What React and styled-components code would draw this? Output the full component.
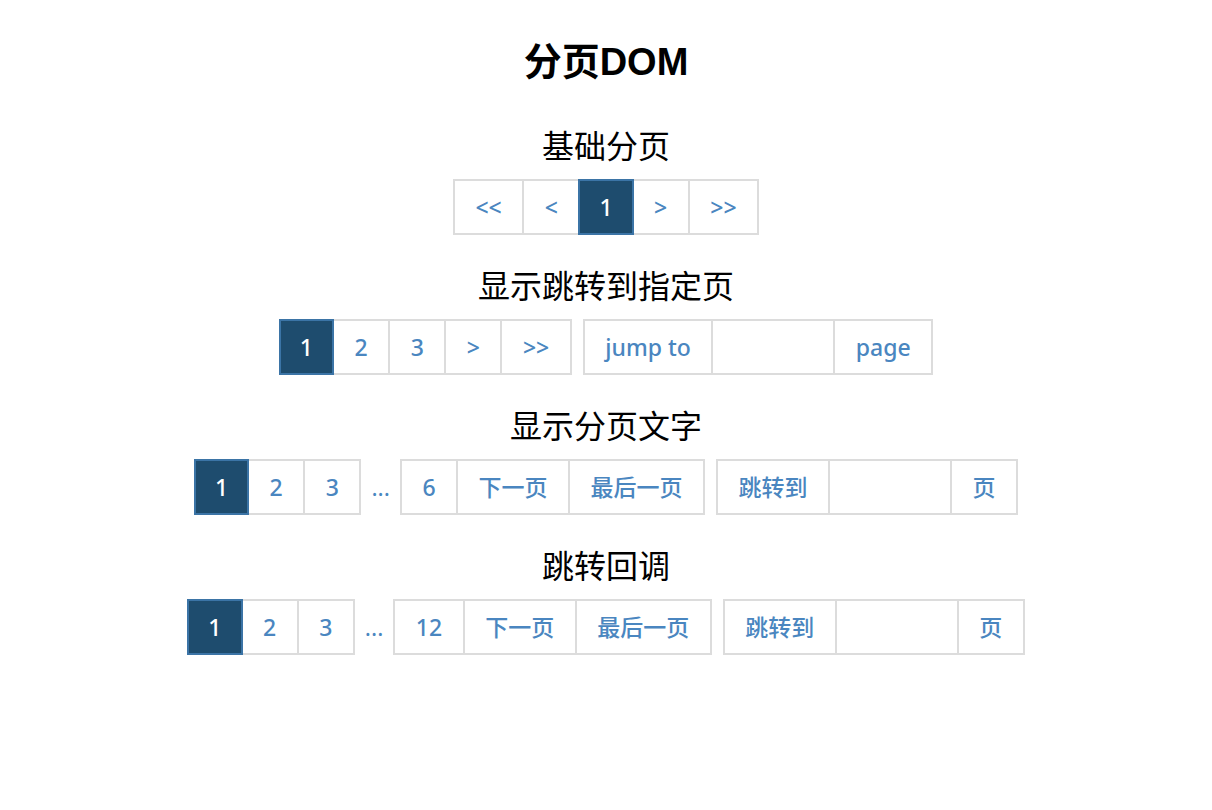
import React from 'react';
import styled, { createGlobalStyle, css } from 'styled-components';

const Global = createGlobalStyle`
  html, body { margin: 0; padding: 0; background: #fff; }
  body { font-family: "Noto Sans", "Noto Sans CJK SC", sans-serif; color: #000; }
`;

const LINK = '#4a86c0';
const BORDER = '#dcdcdc';

const Page = styled.div`
  display: flex;
  flex-direction: column;
  align-items: center;
  padding-top: 40px;
`;

const Heading = styled.h1`
  margin: 0;
  font-family: "Liberation Sans", "Noto Sans CJK SC", sans-serif;
  font-size: 38px;
  line-height: 44px;
  font-weight: 700;
`;

const Sections = styled.div`
  margin-top: 40px;
  display: flex;
  flex-direction: column;
  align-items: center;
  gap: 29px;
  width: 100%;
`;

const Section = styled.section`
  display: flex;
  flex-direction: column;
  align-items: center;
  gap: 15px;
`;

const SectionTitle = styled.h3`
  margin: 0;
  font-family: "Noto Sans CJK SC", sans-serif;
  font-size: 32px;
  line-height: 40px;
  font-weight: 400;
`;

const Row = styled.div`
  display: flex;
  align-items: center;
  justify-content: center;
`;

const Pager = styled.ul`
  display: flex;
  list-style: none;
  margin: 0;
  padding: 0;
`;

const cell = css`
  box-sizing: border-box;
  height: 56px;
  border: 2px solid ${BORDER};
  margin-left: -2px;
  &:first-child { margin-left: 0; }
`;

const label = css`
  padding: 0 20.5px;
  font-size: 23px;
  font-weight: 500;
  line-height: 52px;
  color: ${LINK};
  white-space: nowrap;
`;

const PageItem = styled.li`
  ${cell}
  ${label}
  background: #fff;
  cursor: pointer;
  ${(p) => p.$active && css`
    position: relative;
    z-index: 1;
    padding: 0 19px;
    background: #1e4c6e;
    border-color: #3b74a6;
    color: #fff;
  `}
`;

const Ellipsis = styled.span`
  padding: 0 10px;
  font-size: 23px;
  line-height: 52px;
  color: ${LINK};
`;

const JumpGroup = styled.div`
  display: flex;
  margin-left: 11px;
`;

const JumpLabel = styled.span`
  ${cell}
  ${label}
`;

const JumpInput = styled.input`
  ${cell}
  width: 124px;
  padding: 0 8px;
  font-size: 20px;
  outline: none;
  background: #fff;
`;

function Items({ items, active }) {
  return (
    <Pager>
      {items.map((t, i) => (
        <PageItem key={i} $active={t === active}>{t}</PageItem>
      ))}
    </Pager>
  );
}

function Jump({ label, unit }) {
  return (
    <JumpGroup>
      <JumpLabel>{label}</JumpLabel>
      <JumpInput type="text" />
      <JumpLabel>{unit}</JumpLabel>
    </JumpGroup>
  );
}

export default function App() {
  return (
    <Page>
      <Global />
      <Heading>分页DOM</Heading>
      <Sections>
        <Section>
          <SectionTitle>基础分页</SectionTitle>
          <Row>
            <Items items={['<<', '<', '1', '>', '>>']} active="1" />
          </Row>
        </Section>
        <Section>
          <SectionTitle>显示跳转到指定页</SectionTitle>
          <Row>
            <Items items={['1', '2', '3', '>', '>>']} active="1" />
            <Jump label="jump to" unit="page" />
          </Row>
        </Section>
        <Section>
          <SectionTitle>显示分页文字</SectionTitle>
          <Row>
            <Items items={['1', '2', '3']} active="1" />
            <Ellipsis>...</Ellipsis>
            <Items items={['6', '下一页', '最后一页']} />
            <Jump label="跳转到" unit="页" />
          </Row>
        </Section>
        <Section>
          <SectionTitle>跳转回调</SectionTitle>
          <Row>
            <Items items={['1', '2', '3']} active="1" />
            <Ellipsis>...</Ellipsis>
            <Items items={['12', '下一页', '最后一页']} />
            <Jump label="跳转到" unit="页" />
          </Row>
        </Section>
      </Sections>
    </Page>
  );
}
